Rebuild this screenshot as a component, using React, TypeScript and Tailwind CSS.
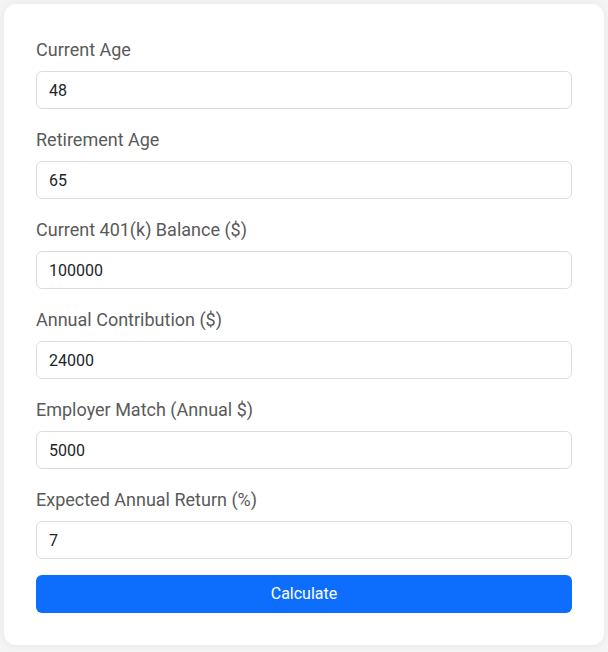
const fields = [
  { label: 'Current Age', value: '48' },
  { label: 'Retirement Age', value: '65' },
  { label: 'Current 401(k) Balance ($)', value: '100000' },
  { label: 'Annual Contribution ($)', value: '24000' },
  { label: 'Employer Match (Annual $)', value: '5000' },
  { label: 'Expected Annual Return (%)', value: '7' },
]

export default function App() {
  return (
    <div className="min-h-screen bg-[#f4f4f4] pt-1 font-['Roboto',sans-serif]">
      <div className="mx-auto w-[600px] rounded-xl bg-white p-8 shadow-[0_0_10px_rgba(0,0,0,0.06)]">
        <div className="flex flex-col gap-[17px]">
          {fields.map((f) => (
            <div key={f.label}>
              <label className="mb-[7px] block text-lg leading-7 text-[#5a5a5a]">{f.label}</label>
              <input
                type="number"
                defaultValue={f.value}
                className="block h-[38px] w-full rounded-md border border-[#dcdcdc] px-3 text-base text-[#212529] outline-none [appearance:textfield]"
              />
            </div>
          ))}
        </div>
        <button className="mt-4 block h-[38px] w-full rounded-md bg-[#0d6efd] text-base text-white">
          Calculate
        </button>
      </div>
    </div>
  )
}
